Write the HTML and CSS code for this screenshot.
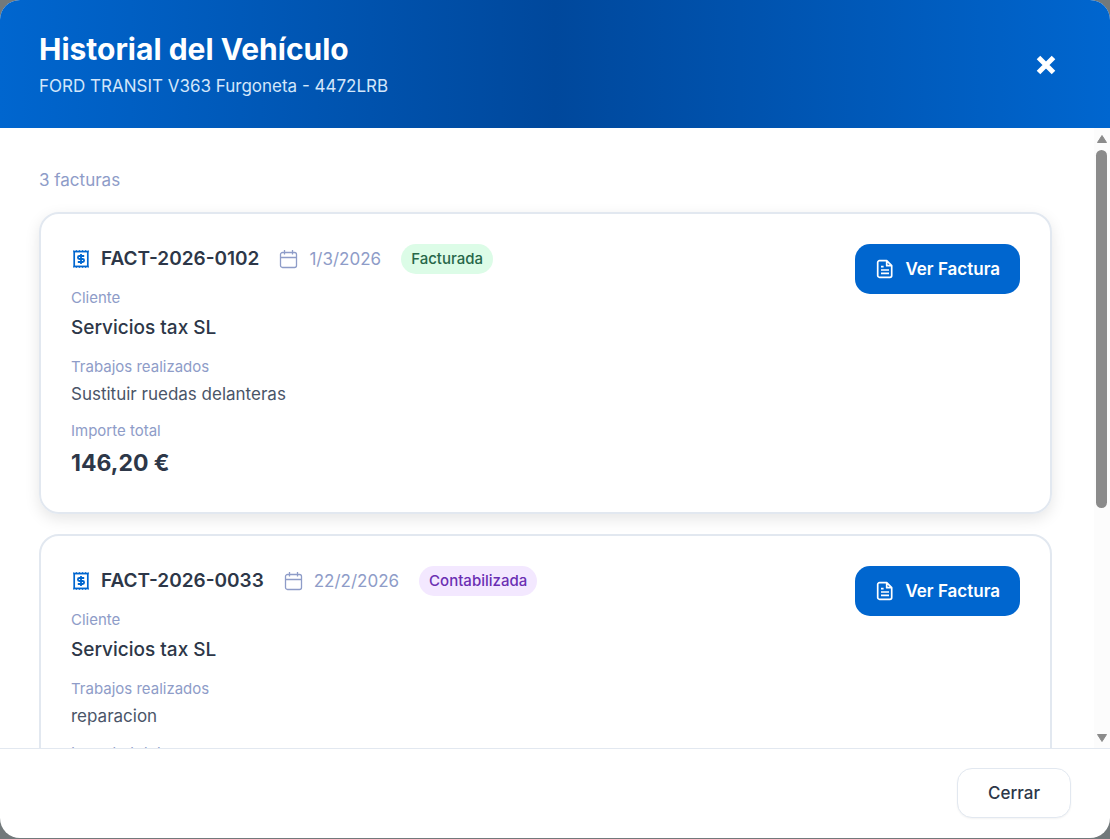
FILE: index.html
```html
<!DOCTYPE html>
<html lang="es">
<head>
    <meta charset="UTF-8">
    <meta name="viewport" content="width=device-width, initial-scale=1">
    <title>Historial del Vehículo</title>
    <link rel="stylesheet" href="styles.css">
</head>
<body>
<svg class="sprite" aria-hidden="true">
    <symbol id="icon-receipt" viewBox="0 0 20 20">
        <path d="M3.2 2.5h13.6v15H3.2z" fill="none" stroke="currentColor" stroke-width="1.7"/>
        <path d="M2.4 1l1.5 1.2L5.4 1l1.5 1.2L8.4 1l1.6 1.2L11.6 1l1.5 1.2L14.6 1l1.5 1.2L17.6 1v2.3H2.4zM2.4 19l1.5-1.2L5.4 19l1.5-1.2L8.4 19l1.6-1.2 1.6 1.2 1.5-1.2 1.5 1.2 1.5-1.2 1.5 1.2v-2.3H2.4z" fill="currentColor"/>
        <path d="M13.2 7H8.4a1.5 1.5 0 0 0 0 3h3.2a1.5 1.5 0 0 1 0 3H6.8M10 5v10" fill="none" stroke="currentColor" stroke-width="1.8"/>
    </symbol>
    <symbol id="icon-calendar" viewBox="0 0 20 20">
        <path d="M3.5 3.5h12a2 2 0 0 1 2 2v11a2 2 0 0 1-2 2h-12a2 2 0 0 1-2-2v-11a2 2 0 0 1 2-2zM1.5 8.5h16M5.5 1v4.5M13.5 1v4.5" fill="none" stroke="currentColor" stroke-width="1.3"/>
    </symbol>
    <symbol id="icon-file" viewBox="0 0 20 20">
        <path d="M4.5 1.7h7.2l5 5v9.8a1.8 1.8 0 0 1-1.8 1.8H4.5a1.8 1.8 0 0 1-1.8-1.8v-13a1.8 1.8 0 0 1 1.8-1.8zM11.7 1.7v5h5M6 7.7h2.6M6 11h8M6 14.3h8" fill="none" stroke="currentColor" stroke-width="1.7" stroke-linejoin="round"/>
    </symbol>
</svg>
<div class="modal" role="dialog" aria-labelledby="modal-title">
    <header class="modal-header">
        <div>
            <h1 id="modal-title">Historial del Vehículo</h1>
            <p>FORD TRANSIT V363 Furgoneta - 4472LRB</p>
        </div>
        <button type="button" class="btn-close" aria-label="Cerrar historial">
            <svg viewBox="0 0 20 20"><path d="M2.5 2.5l15 15M17.5 2.5l-15 15" stroke="currentColor" stroke-width="5"/></svg>
        </button>
    </header>
    <main class="modal-body">
        <p class="count">3 facturas</p>
        <article class="card card-active">
            <div class="card-info">
                <div class="card-head">
                    <h2><svg class="icon icon-blue"><use href="#icon-receipt"/></svg>FACT-2026-0102</h2>
                    <span class="date"><svg class="icon"><use href="#icon-calendar"/></svg>1/3/2026</span>
                    <span class="badge badge-green">Facturada</span>
                </div>
                <dl>
                    <div><dt>Cliente</dt><dd class="client">Servicios tax SL</dd></div>
                    <div><dt>Trabajos realizados</dt><dd class="works">Sustituir ruedas delanteras</dd></div>
                    <div><dt>Importe total</dt><dd class="total">146,20 €</dd></div>
                </dl>
            </div>
            <button type="button" class="btn-primary"><svg class="icon"><use href="#icon-file"/></svg>Ver Factura</button>
        </article>
        <article class="card">
            <div class="card-info">
                <div class="card-head">
                    <h2><svg class="icon icon-blue"><use href="#icon-receipt"/></svg>FACT-2026-0033</h2>
                    <span class="date"><svg class="icon"><use href="#icon-calendar"/></svg>22/2/2026</span>
                    <span class="badge badge-purple">Contabilizada</span>
                </div>
                <dl>
                    <div><dt>Cliente</dt><dd class="client">Servicios tax SL</dd></div>
                    <div><dt>Trabajos realizados</dt><dd class="works">reparacion</dd></div>
                    <div><dt>Importe total</dt></div>
                </dl>
            </div>
            <button type="button" class="btn-primary"><svg class="icon"><use href="#icon-file"/></svg>Ver Factura</button>
        </article>
    </main>
    <div class="scroll-rail" aria-hidden="true">
        <svg viewBox="0 0 12 10"><path d="M6 1.5l4.5 7h-9z" fill="currentColor" stroke="currentColor" stroke-linejoin="round"/></svg>
        <div class="scroll-track"><div class="scroll-thumb"></div></div>
        <svg viewBox="0 0 12 10"><path d="M6 8.5l4.5-7h-9z" fill="currentColor" stroke="currentColor" stroke-linejoin="round"/></svg>
    </div>
    <footer class="modal-footer">
        <button type="button" class="btn-secondary">Cerrar</button>
    </footer>
</div>
</body>
</html>
```
FILE: styles.css
```css
*{
    box-sizing:border-box;
}
html,body,h1,h2,p,dl,dt,dd{
    margin:0;
    padding:0;
}
body{
    background:#72797b;
    color:#2d3748;
    font:17px/28px Inter,"Liberation Sans",sans-serif;
}
button{
    font:inherit;
    cursor:pointer;
}
.sprite{
    display:none;
}
.modal{
    display:grid;
    grid-template:auto minmax(0,1fr) auto / minmax(0,1fr) 16px;
    height:calc(100vh - 1px);
    background:#fff;
    border-radius:20px;
    overflow:hidden;
}

/* header */
.modal-header{
    grid-column:1 / -1;
    display:flex;
    justify-content:space-between;
    align-items:center;
    height:128px;
    padding:2px 39px 0;
    background:linear-gradient(90deg,#0066cf,#00489c 50%,#0066cf);
    color:#fff;
}
.modal-header h1{
    margin-bottom:3px;
    font-size:30px;
    line-height:38px;
    font-weight:700;
}
.modal-header p{
    color:#d3e6fa;
    line-height:30px;
}
.btn-close{
    display:flex;
    padding:15px;
    border:0;
    background:none;
    color:#fff;
}
.btn-close svg{
    width:20px;
    height:20px;
}

/* invoice list */
.modal-body{
    padding:38px 42px 0 39px;
    overflow:hidden;
}
.count{
    margin-bottom:18px;
    color:#8e9cc8;
}
.card{
    display:flex;
    justify-content:space-between;
    align-items:flex-start;
    margin-bottom:20px;
    padding:30px;
    border:2px solid #e2e8f0;
    border-radius:20px;
}
.card-active{
    box-shadow:0 5px 15px rgba(0,0,0,.1);
}
.card-head{
    display:flex;
    align-items:center;
    gap:20px;
    height:30px;
    margin-bottom:14px;
}
.card-head h2,.date{
    display:flex;
    align-items:center;
    gap:10px;
}
.card-head h2{
    font-size:19px;
    font-weight:600;
}
.icon{
    width:20px;
    height:20px;
}
.icon-blue{
    color:#0066cf;
}
.date,dt{
    color:#8e9cc8;
}
.badge{
    padding:0 10px;
    border-radius:15px;
    font-size:15px;
    line-height:30px;
    font-weight:500;
}
.badge-green{
    background:#dcfce7;
    color:#276749;
}
.badge-purple{
    background:#f3e8ff;
    color:#6b2fb3;
}
dl{
    display:grid;
    gap:14px;
}
dt{
    margin-bottom:4px;
    font-size:15px;
    line-height:20px;
}
.client{
    font-size:19px;
    line-height:31px;
    font-weight:500;
}
.works{
    color:#4a5568;
    line-height:26px;
}
.total{
    font-size:23px;
    line-height:37px;
    font-weight:700;
}
.btn-primary{
    display:flex;
    align-items:center;
    gap:10px;
    height:50px;
    padding:0 20px;
    border:0;
    border-radius:15px;
    background:#0066cf;
    color:#fff;
    font-weight:600;
}

/* scroll bar */
.scroll-rail{
    display:flex;
    flex-direction:column;
    padding:6px 2px 5px;
    background:#fcfcfc;
    color:#8b8b8b;
}
.scroll-rail svg{
    width:12px;
    height:10px;
}
.scroll-track{
    flex:1;
    padding:6px 0;
}
.scroll-thumb{
    width:11px;
    height:62%;
    border-radius:6px;
    background:#8b8b8b;
}

/* footer */
.modal-footer{
    grid-column:1 / -1;
    display:flex;
    justify-content:flex-end;
    padding:19px 39px 20px;
    border-top:1px solid #e2e8f0;
}
.btn-secondary{
    height:50px;
    padding:0 30px;
    border:1px solid #e2e8f0;
    border-radius:15px;
    background:#fff;
    color:#2d3748;
    font-weight:500;
    box-shadow:0 1px 2px rgba(0,0,0,.05);
}
```
